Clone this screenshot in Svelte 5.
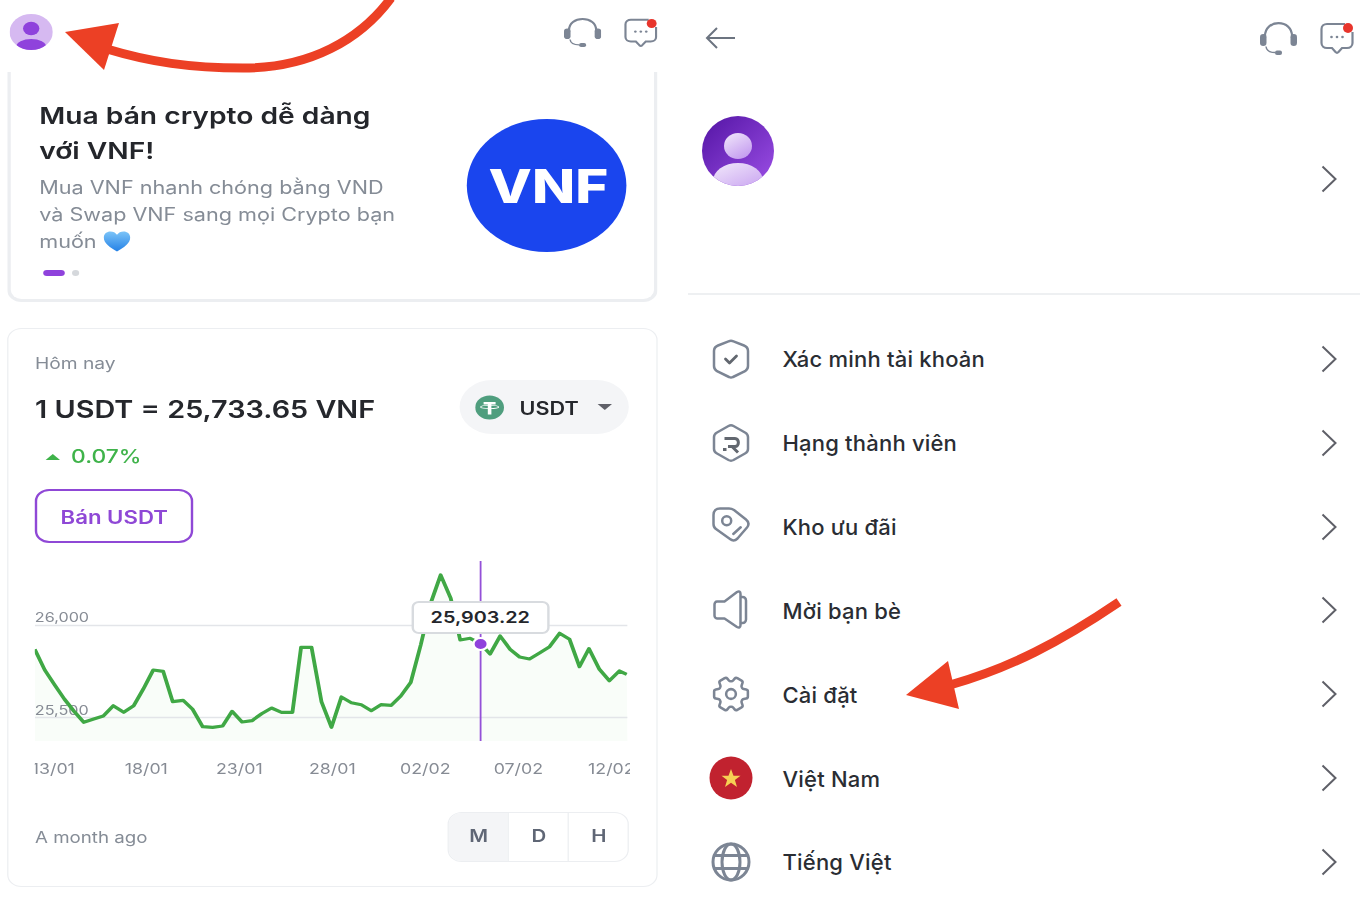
<script lang="ts">
  const raw = [
    [82,298],[105,360],[128,405],[150,447],[172,483],[195,517],[218,507],[240,498],[263,467],[287,487],
    [310,467],[332,418],[355,360],[378,364],[400,455],[424,451],[446,478],[469,530],[492,532],[515,528],
    [537,484],[560,516],[583,512],[605,491],[628,474],[651,487],[676,487],[696,292],[720,292],[743,455],
    [766,532],[789,441],[812,458],[835,464],[858,482],[880,464],[904,466],[926,438],[949,397],[972,285],
    [995,160],[1018,75],[1041,145],[1063,270],[1086,265],[1109,280],[1132,312],[1155,258],[1178,298],[1200,321],
    [1223,327],[1246,309],[1269,290],[1292,250],[1315,268],[1338,350],[1360,296],[1384,358],[1407,392],[1430,363],[1447,373],
  ];
  // crop coordinates -> chart coordinates
  const pts = raw.map(([x, y]) => [((x - 82) / 2.306 / 1.2).toFixed(1), (y / 3 - 11).toFixed(1)]);
  const line = pts.map((p) => p.join(",")).join(" ");
  const area = `0,180 ${line} 494,180`;
  const labels = ["13/01", "18/01", "23/01", "28/01", "02/02", "07/02", "12/02"];
  const menu = [
    { id: "shield", label: "Xác minh tài khoản" },
    { id: "rank", label: "Hạng thành viên" },
    { id: "tag", label: "Kho ưu đãi" },
    { id: "speaker", label: "Mời bạn bè" },
    { id: "gear", label: "Cài đặt" },
    { id: "flag", label: "Việt Nam" },
    { id: "globe", label: "Tiếng Việt" },
  ];
</script>

{#snippet headset(w, h)}
  <svg width={w} height={h} viewBox="0 0 37 33" preserveAspectRatio="none" fill="none">
    <path d="M5 16V14C5 6 11 1.200 18.500 1.200S32 6 32 14v2" stroke="#7c8594" stroke-width="2.200" />
    <rect x="0" y="12" width="6.500" height="12" rx="3.200" fill="#7c8594" />
    <rect x="30.500" y="12" width="6.500" height="12" rx="3.200" fill="#7c8594" />
    <path d="M6 24.500c.5 4 3 6 9 6" stroke="#7c8594" stroke-width="1.500" />
    <rect x="15" y="28.500" width="7" height="4.500" rx="2" fill="#7c8594" />
  </svg>
{/snippet}

{#snippet chat(w, h)}
  <svg width={w} height={h} viewBox="0 0 34 32" preserveAspectRatio="none" fill="none">
    <path d="M25 2H7C4 2 1.500 4 1.500 7v14c0 3 2.500 5 5.500 5h5l3.500 4c1 1 2 1 3 0L22 26H27c3 0 5.500-2 5.500-5V10" stroke="#7c8594" stroke-width="2.200" />
    <circle cx="11.500" cy="15" r="1.300" fill="#7c8594" />
    <circle cx="17" cy="15" r="1.300" fill="#7c8594" />
    <circle cx="22.500" cy="15" r="1.300" fill="#7c8594" />
    <circle cx="28" cy="6" r="5" fill="#e8352c" />
  </svg>
{/snippet}

{#snippet chevron()}
  <svg class="chev" width="16" height="28" viewBox="0 0 16 28" fill="none">
    <path d="M1.500 1.500L14.500 14 1.500 26.500" stroke="#5f6068" stroke-width="2" />
  </svg>
{/snippet}

{#snippet menuIcon(id)}
  <svg width="44" height="44" viewBox="0 0 44 44" fill="none" stroke="#7c8594" stroke-width="2.500" stroke-linejoin="round" stroke-linecap="round">
    {#if id === "shield"}
      <path d="M19.500 4.300 9 8.500c-2.500 1-4 2.700-4 5.500v15c0 2.500 1 4 3 5.200L20 40c1.300.7 2.700.7 4 0l12-5.800c2-1.200 3-2.700 3-5.200V14c0-2.800-1.500-4.500-4-5.500L24.500 4.300c-1.700-.7-3.300-.7-5 0z" />
      <path d="M16.500 22l4 4 7-7" stroke="#62676f" stroke-width="2.800" />
    {:else if id === "rank"}
      <path d="M19.500 5 8 11.500c-2 1.100-3 2.500-3 4.500v12c0 2 1 3.400 3 4.500L19.500 39c1.700.9 3.300.9 5 0L36 32.500c2-1.100 3-2.500 3-4.500V16c0-2-1-3.400-3-4.500L24.500 5c-1.700-.9-3.300-.9-5 0z" />
      <path d="M15.500 17.500H26c4.500 0 4.500 8 0 8H19M23 25.500l6 6" stroke="#62676f" stroke-width="3" stroke-linecap="butt" stroke-linejoin="miter" />
      <path d="M14 28.500h3.500" stroke="#62676f" stroke-width="3" stroke-linecap="butt" />
    {:else if id === "tag"}
      <path d="M11 3.500H20c2 0 3.500.5 5 1.500L37 14.500c3 2.500 3 5.500 1 8L28.500 33.500c-2.500 2.500-5 2.500-7.500.5L7 24c-1.500-1-2.500-2.500-2.500-5V10C4.500 6 7 3.500 11 3.500z" />
      <circle cx="17.700" cy="15.700" r="4.500" />
      <path d="M24.300 29l7.400-6.700" />
    {:else if id === "speaker"}
      <path d="M5 14c-1.500 0-2.500 1.500-2.500 3v11c0 1.500 1 3 2.500 3h7.500l12.500 8.500c2 1 3.500.5 3.500-2V6.500c0-2.500-1.500-3-3.500-2L12.500 14z" transform="translate(3 -0.500)" />
      <path d="M32 9h1.500c2 0 3.500 1.500 3.500 3.500v19c0 2-1.500 3.500-3.500 3.500H32" />
    {:else if id === "gear"}
      <g transform="rotate(90 22 22) translate(-0.500 -0.500) scale(1.875)" stroke-width="1.350">
        <path d="M9.594 3.94c.09-.542.56-.94 1.11-.94h2.593c.55 0 1.02.398 1.11.94l.213 1.281c.063.374.313.686.645.87.074.04.147.083.22.127.325.196.72.257 1.075.124l1.217-.456a1.125 1.125 0 011.37.49l1.296 2.247a1.125 1.125 0 01-.26 1.431l-1.003.827c-.293.24-.438.613-.431.992a6.759 6.759 0 010 .255c-.007.378.138.75.43.99l1.005.828c.424.35.534.954.26 1.43l-1.298 2.247a1.125 1.125 0 01-1.369.491l-1.217-.456c-.355-.133-.75-.072-1.076.124a6.57 6.57 0 01-.22.128c-.331.183-.581.495-.644.869l-.213 1.28c-.09.543-.56.941-1.11.941h-2.594c-.55 0-1.02-.398-1.11-.94l-.213-1.281c-.062-.374-.312-.686-.644-.87a6.52 6.52 0 01-.22-.127c-.325-.196-.72-.257-1.076-.124l-1.217.456a1.125 1.125 0 01-1.369-.49l-1.297-2.247a1.125 1.125 0 01.26-1.431l1.004-.827c.292-.24.437-.613.43-.992a6.932 6.932 0 010-.255c.007-.378-.138-.75-.43-.99l-1.004-.828a1.125 1.125 0 01-.26-1.43l1.297-2.247a1.125 1.125 0 011.37-.491l1.216.456c.356.133.751.072 1.076-.124.072-.044.146-.087.22-.128.332-.183.582-.495.644-.869l.214-1.281z" />
        <circle cx="12" cy="12" r="2.600" />
      </g>
    {:else if id === "flag"}
      <circle cx="22" cy="22" r="21.500" fill="#c1222f" stroke="none" />
      <path d="M22 13l2.500 6.700h7l-5.600 4.300 2.100 7-6-4.200-6 4.200 2.100-7-5.600-4.300h7z" fill="#f7cf54" stroke="none" />
    {:else}
      <g stroke-width="3">
        <circle cx="22" cy="22" r="18" />
        <ellipse cx="22" cy="22" rx="9" ry="18" />
        <path d="M5.500 15.500h33M5.500 28.500h33" />
      </g>
    {/if}
  </svg>
{/snippet}

<div class="page">
  <div class="left-slot">
    <main class="left">
      <header class="top">
        <svg class="me" width="36" height="36" viewBox="0 0 36 36">
          <defs><clipPath id="meClip"><circle cx="18" cy="18" r="18" /></clipPath></defs>
          <circle cx="18" cy="18" r="18" fill="#d6b9f1" />
          <g clip-path="url(#meClip)" fill="#8f42dc">
            <circle cx="18" cy="14.500" r="6.800" />
            <ellipse cx="18" cy="33" rx="12.500" ry="8" />
          </g>
        </svg>
        <div class="top-icons">
          {@render headset(31, 29)}
          {@render chat(28, 29)}
        </div>
      </header>

      <section class="banner">
        <div class="banner-text">
          <h1>Mua bán crypto dễ dàng<br />với VNF!</h1>
          <p>
            Mua VNF nhanh chóng bằng VND<br />và Swap VNF sang mọi Crypto bạn<br />muốn<svg class="heart" width="23" height="21" viewBox="0 0 23 21">
              <defs>
                <linearGradient id="heartFill" x1="0" y1="0" x2="0" y2="1">
                  <stop offset="0" stop-color="#7cc4f8" />
                  <stop offset="1" stop-color="#2481e6" />
                </linearGradient>
              </defs>
              <path d="M11.500 20.500C6 16.500.5 12.500.5 6.500.5 2.800 3 .5 6 .5c2.400 0 4.300 1.200 5.500 3.300C12.700 1.700 14.600.5 17 .5c3 0 5.500 2.300 5.500 6 0 6-5.500 10-11 14z" fill="url(#heartFill)" />
            </svg>
          </p>
          <div class="dots"><span class="on"></span><span></span></div>
        </div>
        <div class="coin">VNF</div>
      </section>

      <section class="rate">
        <div class="muted">Hôm nay</div>
        <div class="rate-row">
          <div class="price">1 USDT = 25,733.65 VNF</div>
          <div class="pill">
            <svg width="24" height="25" viewBox="0 0 24 25">
              <circle cx="12" cy="12.500" r="12" fill="#4f9e7e" />
              <path d="M7 7h10v2.500h-3.500v10h-3v-10H7z" fill="#fff" />
              <ellipse cx="12" cy="12" rx="7.500" ry="1.600" fill="none" stroke="#fff" stroke-width="0.900" />
            </svg>
            <span>USDT</span>
            <i class="caret"></i>
          </div>
        </div>
        <div class="delta"><i class="up"></i>0.07%</div>
        <button class="sell">Bán USDT</button>

        <div class="chart">
          <svg width="494" height="180" viewBox="0 0 494 180">
            <polygon points={area} fill="#f9fdf9" />
            <path d="M0 64.500H494M0 156.500H494" stroke="#e3e5e9" stroke-width="1.500" />
            <text x="0" y="61" class="tick">26,000</text>
            <text x="0" y="154" class="tick">25,500</text>
            <polyline points={line} fill="none" stroke="#40a845" stroke-width="3.200" stroke-linejoin="round" />
            <path d="M371.500 0V180" stroke="#9450d8" stroke-width="1.500" />
            <circle cx="371.500" cy="83" r="6" fill="#8f42dc" stroke="#fff" stroke-width="2" />
          </svg>
          <div class="tip">25,903.22</div>
        </div>

        <div class="xaxis">
          {#each labels as label}
            <span>{label}</span>
          {/each}
        </div>

        <div class="foot">
          <span class="muted ago">A month ago</span>
          <div class="seg">
            <span class="active">M</span>
            <span>D</span>
            <span>H</span>
          </div>
        </div>
      </section>
    </main>
  </div>

  <aside class="right">
    <header class="rtop">
      <svg width="32" height="24" viewBox="0 0 32 24" fill="none">
        <path d="M30 12H2M12 2L2 12l10 10" stroke="#6c7480" stroke-width="2" />
      </svg>
      <div class="rtop-icons">
        {@render headset(37, 33)}
        {@render chat(34, 32)}
      </div>
    </header>

    <div class="profile">
      <svg width="72" height="70" viewBox="0 0 72 70">
        <defs>
          <linearGradient id="avBg" x1="0" y1="0" x2="1" y2="1">
            <stop offset="0" stop-color="#5314a4" />
            <stop offset="1" stop-color="#9c4fe6" />
          </linearGradient>
          <linearGradient id="avFg" x1="0" y1="0" x2="0.600" y2="1">
            <stop offset="0" stop-color="#f2e9fb" />
            <stop offset="1" stop-color="#c69ff0" />
          </linearGradient>
          <clipPath id="avClip"><ellipse cx="36" cy="35" rx="36" ry="35" /></clipPath>
        </defs>
        <ellipse cx="36" cy="35" rx="36" ry="35" fill="url(#avBg)" />
        <ellipse cx="36" cy="30" rx="14" ry="13" fill="url(#avFg)" />
        <g clip-path="url(#avClip)"><ellipse cx="36" cy="65" rx="25" ry="18" fill="url(#avFg)" /></g>
      </svg>
      {@render chevron()}
    </div>

    <ul class="menu">
      {#each menu as item (item.id)}
        <li>
          <span class="ic">{@render menuIcon(item.id)}</span>
          <span class="lbl">{item.label}</span>
          {@render chevron()}
        </li>
      {/each}
    </ul>
  </aside>

  <svg class="marks" width="1360" height="898" viewBox="0 0 1360 898" fill="none">
    <path d="M107 49C150 62 190 68 243 68 310 68 360 40 391 -2" stroke="#ec4025" stroke-width="9" />
    <path d="M65 32L119 23 104 70z" fill="#ec4025" />
    <path d="M1119 602C1060 642 1010 668 950 685" stroke="#ec4025" stroke-width="9" />
    <path d="M906 695L948 661 959 709z" fill="#ec4025" />
  </svg>
</div>

<style>
  :global(body) {
    margin: 0;
    background: #fff;
    font-family: Inter, "Noto Sans", sans-serif;
    color: #25272c;
  }
  .page {
    position: relative;
    display: flex;
    width: 1360px;
    height: 898px;
    overflow: hidden;
    background: #fff;
  }
  .left-slot {
    width: 680px;
    flex: none;
  }
  /* the left phone shot is stretched sideways in the source */
  .left {
    width: 566.67px;
    transform: scaleX(1.2);
    transform-origin: 0 0;
  }
  .top {
    height: 72px;
    display: flex;
    align-items: center;
    justify-content: space-between;
    padding: 0 19px 8px 8px;
    box-sizing: border-box;
  }
  .me {
    display: block;
  }
  .top-icons {
    display: flex;
    align-items: center;
    gap: 19px;
  }
  .banner {
    margin: 0 18.200px 0 6px;
    height: 230px;
    box-sizing: border-box;
    border: 3px solid #eceef1;
    border-top: 0;
    border-radius: 0 0 12px 12px;
    display: flex;
    justify-content: space-between;
    padding: 25.500px 23.500px 0 23.700px;
  }
  h1 {
    margin: 0;
    font-size: 23.500px;
    line-height: 35px;
    font-weight: 600;
    color: #24262b;
  }
  .banner p {
    margin: 6.500px 0 0;
    font-size: 18px;
    line-height: 27px;
    color: #858c96;
  }
  .heart {
    vertical-align: -4px;
    margin-left: 5px;
  }
  .dots {
    display: flex;
    gap: 6px;
    margin: 15px 0 0 3px;
  }
  .dots span {
    width: 6px;
    height: 6px;
    border-radius: 50%;
    background: #d5d8dc;
  }
  .dots .on {
    width: 18px;
    border-radius: 3px;
    background: #8f42dc;
  }
  .coin {
    width: 133px;
    height: 133px;
    margin-top: 21.500px;
    flex: none;
    border-radius: 50%;
    background: #1a45ee;
    color: #fff;
    font-size: 47px;
    font-weight: 800;
    line-height: 133px;
    text-align: center;
    text-indent: 3px;
  }
  .rate {
    margin: 26px 18.200px 0 6px;
    height: 559px;
    box-sizing: border-box;
    border: 1.500px solid #eceef1;
    border-radius: 12px;
    padding: 21px 23px 0 22.200px;
  }
  .muted {
    font-size: 16px;
    line-height: 26px;
    color: #858c96;
  }
  .ago {
    margin-top: 2px;
    font-size: 15.600px;
  }
  .rate-row {
    display: flex;
    align-items: center;
    justify-content: space-between;
    margin-top: 4px;
    height: 54px;
  }
  .price {
    font-size: 24px;
    font-weight: 600;
    color: #25272c;
    padding-top: 4px;
  }
  .pill {
    width: 141px;
    height: 54px;
    box-sizing: border-box;
    border-radius: 27px;
    background: #f4f5f7;
    display: flex;
    align-items: center;
    padding: 0 14px 0 12.500px;
    font-size: 18px;
    font-weight: 600;
  }
  .pill span {
    margin-left: 13px;
    padding-top: 2px;
  }
  .caret {
    margin-left: auto;
    border: 6px solid transparent;
    border-top: 6px solid #5f6068;
    border-bottom: 0;
  }
  .delta {
    margin-top: 9px;
    height: 28px;
    line-height: 28px;
    font-size: 19px;
    font-weight: 500;
    color: #3fb34a;
    display: flex;
    align-items: center;
    padding-left: 9px;
  }
  .up {
    border: 6px solid transparent;
    border-bottom: 6px solid #3fb34a;
    border-top: 0;
    margin-right: 9px;
  }
  .sell {
    display: block;
    margin-top: 18px;
    width: 132px;
    height: 54px;
    border: 2px solid #8f48d6;
    border-radius: 12px;
    background: #fff;
    color: #8f48d6;
    font: 600 18.500px Inter, "Noto Sans", sans-serif;
    padding: 2px 0 0;
  }
  .chart {
    position: relative;
    width: 494px;
    height: 180px;
    margin-top: 18px;
  }
  .chart svg {
    display: block;
  }
  .tick {
    font-size: 13.500px;
    fill: #868b94;
  }
  .tip {
    position: absolute;
    left: 313.500px;
    top: 40px;
    width: 115px;
    height: 33px;
    box-sizing: border-box;
    background: #fff;
    border: 2px solid #d8dbdf;
    border-radius: 6px;
    text-align: center;
    font-size: 16.500px;
    font-weight: 600;
    line-height: 29px;
    color: #24262b;
  }
  .xaxis {
    width: 496px;
    height: 20px;
    margin-top: 18px;
    display: flex;
    overflow: hidden;
    font-size: 14.800px;
    line-height: 20px;
    color: #868b94;
  }
  .xaxis span {
    flex: none;
    width: 77.500px;
    text-align: center;
  }
  .xaxis span:first-child {
    margin-left: -23.500px;
  }
  .foot {
    margin-top: 33px;
    display: flex;
    align-items: center;
    justify-content: space-between;
  }
  .seg {
    display: flex;
    width: 151px;
    height: 50px;
    box-sizing: border-box;
    border: 1.500px solid #eceef1;
    border-radius: 12px;
    overflow: hidden;
    font-size: 17px;
    font-weight: 600;
    color: #5f6675;
  }
  .seg span {
    flex: 1;
    text-align: center;
    line-height: 47px;
    border-left: 1.500px solid #eceef1;
  }
  .seg span:first-child {
    border-left: 0;
  }
  .seg .active {
    background: #f4f5f7;
  }
  .right {
    flex: 1;
    margin-left: 8px;
    min-width: 0;
  }
  .rtop {
    height: 76px;
    display: flex;
    align-items: center;
    justify-content: space-between;
    padding: 0 6px 0 17px;
  }
  .rtop-icons {
    display: flex;
    align-items: center;
    gap: 23px;
  }
  .profile {
    height: 219px;
    box-sizing: border-box;
    border-bottom: 2px solid #eef0f2;
    display: flex;
    align-items: flex-start;
    justify-content: space-between;
    padding: 40px 23px 0 14px;
  }
  .profile .chev {
    margin-top: 49px;
  }
  .menu {
    list-style: none;
    margin: 22px 0 0;
    padding: 0 23px 0 21px;
  }
  .menu li {
    display: flex;
    align-items: center;
    height: 83.830px;
  }
  .ic {
    width: 73.500px;
    flex: none;
    display: flex;
  }
  .lbl {
    flex: 1;
    font-size: 22px;
    letter-spacing: 0.200px;
    font-weight: 500;
    color: #2a2d33;
    padding-top: 1px;
  }
  .marks {
    position: absolute;
    inset: 0;
    pointer-events: none;
  }
</style>
